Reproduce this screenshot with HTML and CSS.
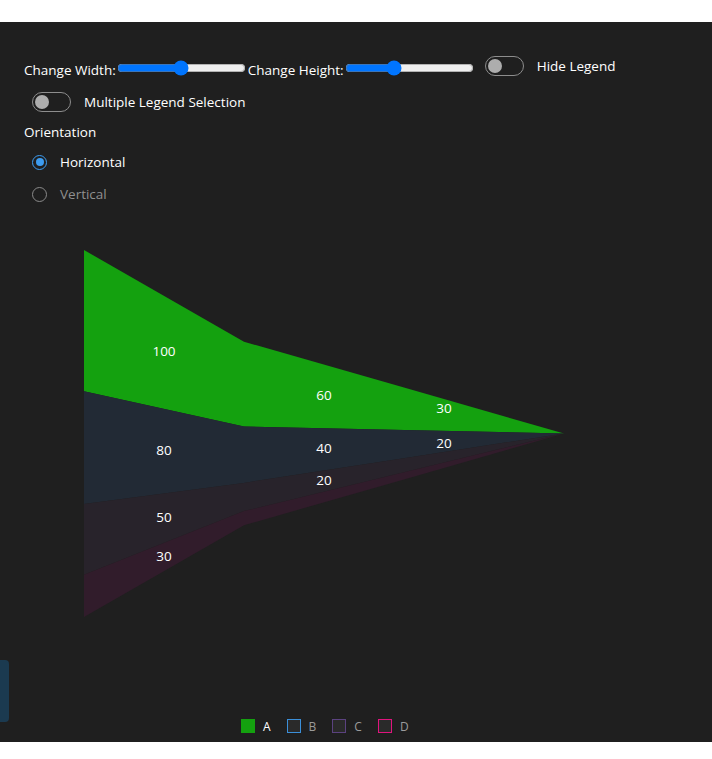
FILE: index.html
```html
<!DOCTYPE html>
<html lang="en">
<head>
<meta charset="utf-8">
<title>Stacked Area Funnel</title>
<link rel="stylesheet" href="styles.css">
</head>
<body>
<div class="panel">
  <div class="controls">
    <div class="row row-top">
      <label class="lbl">Change Width:</label><input class="range" type="range" min="0" max="100" value="50">
      <label class="lbl">Change Height:</label><input class="range" type="range" min="0" max="100" value="37">
      <span class="switch switch-a"><span class="knob"></span></span>
      <span class="switch-text">Hide Legend</span>
    </div>
    <div class="row row-second">
      <span class="switch switch-b"><span class="knob"></span></span>
      <span class="switch-text">Multiple Legend Selection</span>
    </div>
    <div class="group-title">Orientation</div>
    <div class="radio-row">
      <span class="radio radio-on"><span class="dot"></span></span>
      <span class="radio-text">Horizontal</span>
    </div>
    <div class="radio-row">
      <span class="radio"></span>
      <span class="radio-text radio-text-off">Vertical</span>
    </div>
  </div>

  <svg class="chart" width="712" height="478" viewBox="0 222 712 478" xmlns="http://www.w3.org/2000/svg">
    <polygon class="s-a" points="84,250 244,341.75 404,387.6 564,433.5 404,429.97 244,426.44 84,391.15"/>
    <polygon class="s-b" points="84,391.15 244,426.44 404,429.97 564,433.5 404,458.2 244,482.9 84,504.07"/>
    <polygon class="s-c" points="84,504.07 244,482.9 404,458.2 564,433.5 404,472.3 244,511.1 84,574.65"/>
    <polygon class="s-d" points="84,574.65 244,511.1 404,472.3 564,433.5 404,479.4 244,525.25 84,617"/>
    <g class="labels">
      <text x="164" y="351">100</text>
      <text x="324" y="395">60</text>
      <text x="444" y="408">30</text>
      <text x="164" y="450">80</text>
      <text x="324" y="448">40</text>
      <text x="444" y="443">20</text>
      <text x="164" y="517">50</text>
      <text x="324" y="480">20</text>
      <text x="164" y="556">30</text>
    </g>
  </svg>

  <div class="legend">
    <span class="leg-item"><span class="sw sw-a"></span><span class="leg-text leg-on">A</span></span>
    <span class="leg-item"><span class="sw sw-b"></span><span class="leg-text">B</span></span>
    <span class="leg-item"><span class="sw sw-c"></span><span class="leg-text">C</span></span>
    <span class="leg-item"><span class="sw sw-d"></span><span class="leg-text">D</span></span>
  </div>

  <div class="side-tab"></div>
</div>
</body>
</html>
```

FILE: styles.css
```css
html, body {
  margin: 0;
  padding: 0;
  background: #ffffff;
}

body {
  padding-top: 22px;
  font-family: "Open Sans", "Noto Sans", sans-serif;
  font-size: 13.5px;
  color: #ffffff;
}

.panel {
  position: relative;
  background: #1f1f1f;
  height: 720px;
  box-sizing: border-box;
  padding-top: 33px;
  overflow: hidden;
}

.controls {
  padding-left: 24px;
}

.row {
  display: flex;
  align-items: center;
  height: 24px;
}

.row-top .lbl {
  margin-top: 6px;
}

.range {
  width: 129px;
  height: 16px;
  margin: 2px 2px 0 1px;
  accent-color: #0075ff;
}

.switch {
  position: relative;
  display: inline-block;
  width: 37px;
  height: 18px;
  border: 1.5px solid #8d8d8d;
  border-radius: 11px;
  box-sizing: content-box;
}

.switch .knob {
  position: absolute;
  left: 2px;
  top: 2px;
  width: 14px;
  height: 14px;
  border-radius: 50%;
  background: #adadad;
}

.switch-a {
  margin-left: 9px;
  margin-top: -2px;
}

.switch-text {
  margin-left: 13px;
}

.row-top .switch-text {
  margin-top: -2px;
}

.row-second {
  margin-top: 11px;
}

.switch-b {
  margin-left: 8px;
}

.group-title {
  margin-top: 8px;
  height: 20px;
  line-height: 20px;
}

.radio-row {
  display: flex;
  align-items: center;
  height: 24px;
  margin-top: 8px;
}

.radio {
  position: relative;
  width: 13px;
  height: 13px;
  margin-left: 8px;
  border: 1.5px solid #8a8a8a;
  border-radius: 50%;
}

.radio-on {
  border: 1.5px solid #3d9cf0;
}

.radio-on .dot {
  position: absolute;
  left: 2.5px;
  top: 2.5px;
  width: 8px;
  height: 8px;
  border-radius: 50%;
  background: #3d9cf0;
}

.radio-text {
  margin-left: 13px;
}

.radio-text-off {
  color: #8f8f8f;
}

.chart {
  display: block;
  margin-top: 16px;
}

.s-a { fill: #14a10f; }
.s-b { fill: #222a35; }
.s-c { fill: #28232b; }
.s-d { fill: #311c2b; }

.labels text {
  fill: #ffffff;
  font-family: "Open Sans", "Noto Sans", sans-serif;
  font-size: 13.5px;
  text-anchor: middle;
  dominant-baseline: central;
}

.legend {
  display: flex;
  justify-content: flex-start;
  margin-top: 16px;
  padding-left: 233px;
  height: 20px;
  align-items: center;
}

.leg-item {
  display: flex;
  align-items: center;
  margin: 0 8px;
}

.sw {
  display: inline-block;
  width: 14px;
  height: 14px;
  box-sizing: border-box;
}

.sw-a { background: #14a10f; }
.sw-b { background: #2a2a2a; border: 1.5px solid #3b8fd9; }
.sw-c { background: #2a2a2a; border: 1.5px solid #5b4280; }
.sw-d { background: #2a2a2a; border: 1.5px solid #e0147e; }

.leg-text {
  margin-left: 8px;
  font-size: 12px;
  color: #9b9b9b;
}

.leg-on {
  color: #ffffff;
}

.side-tab {
  position: absolute;
  left: -8px;
  top: 638px;
  width: 17px;
  height: 62px;
  border-radius: 4px;
  background: #1b3a50;
}
```
